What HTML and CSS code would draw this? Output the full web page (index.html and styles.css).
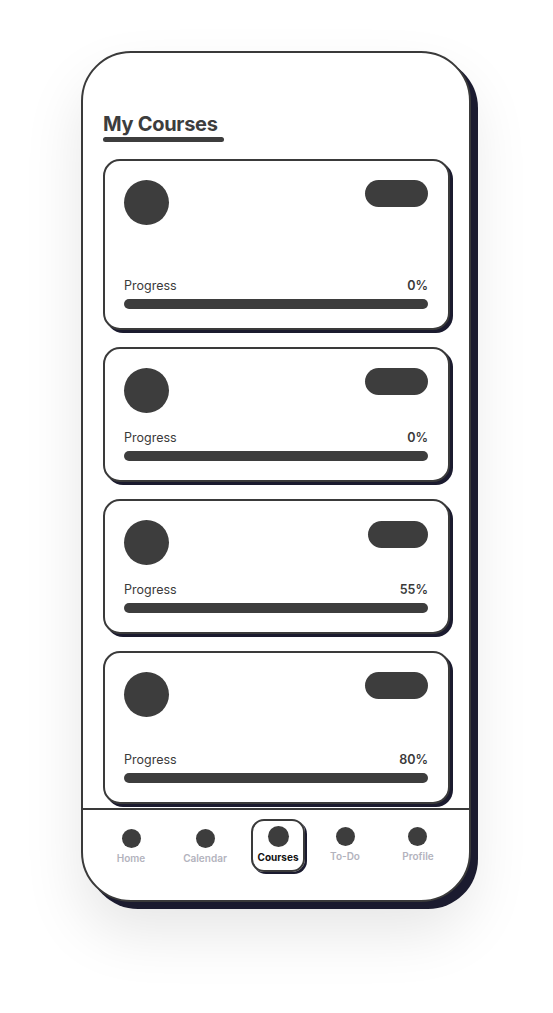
FILE: index.html
```html
<!DOCTYPE html>
<html lang="en">
<head>
<meta charset="utf-8">
<title>My Courses</title>
<link rel="stylesheet" href="styles.css">
</head>
<body>
<div class="stage">
  <div class="phone">
    <main class="content">
      <h1 class="title">My Courses</h1>
      <div class="title-bar"></div>
      <div class="cards">
        <section class="card">
          <div class="card-head"><span class="avatar"></span><span class="pill"></span></div>
          <div class="progress progress--lg">
            <div class="progress-row"><span class="label">Progress</span><span class="pct">0%</span></div>
            <div class="bar"></div>
          </div>
        </section>
        <section class="card">
          <div class="card-head"><span class="avatar"></span><span class="pill"></span></div>
          <div class="progress">
            <div class="progress-row"><span class="label">Progress</span><span class="pct">0%</span></div>
            <div class="bar"></div>
          </div>
        </section>
        <section class="card">
          <div class="card-head"><span class="avatar"></span><span class="pill pill--sm"></span></div>
          <div class="progress">
            <div class="progress-row"><span class="label">Progress</span><span class="pct">55%</span></div>
            <div class="bar"></div>
          </div>
        </section>
        <section class="card">
          <div class="card-head"><span class="avatar"></span><span class="pill"></span></div>
          <div class="progress progress--md">
            <div class="progress-row"><span class="label">Progress</span><span class="pct">80%</span></div>
            <div class="bar"></div>
          </div>
        </section>
      </div>
    </main>
    <nav class="nav">
      <div class="nav-item"><span class="dot"></span><span class="nav-label">Home</span></div>
      <div class="nav-item"><span class="dot"></span><span class="nav-label">Calendar</span></div>
      <div class="nav-item nav-item--active"><span class="dot"></span><span class="nav-label">Courses</span></div>
      <div class="nav-item nav-item--up"><span class="dot"></span><span class="nav-label">To-Do</span></div>
      <div class="nav-item nav-item--up"><span class="dot"></span><span class="nav-label">Profile</span></div>
    </nav>
  </div>
</div>
</body>
</html>
```

FILE: styles.css
```css
* { box-sizing: border-box; }
html, body { margin: 0; padding: 0; background: #ffffff; }
body { font-family: Inter, "Noto Sans", sans-serif; color: #3d3d3d; }

.stage {
  width: 553px;
  height: 1013px;
  padding: 51px 0 0 81px;
}

.phone {
  width: 390px;
  height: 851px;
  border: 2px solid #3a3a3a;
  border-radius: 50px;
  background: #ffffff;
  box-shadow: 7px 7px 0 #1b1b2f, 0 30px 60px rgba(0, 0, 0, 0.10);
  display: flex;
  flex-direction: column;
  overflow: hidden;
}

.content {
  flex: 1;
  padding: 58px 19px 0 20px;
  overflow: hidden;
}

.title {
  margin: 0;
  font-size: 20px;
  line-height: 26px;
  font-weight: 700;
  letter-spacing: -0.3px;
  color: #3d3d3d;
}

.title-bar {
  width: 121px;
  height: 5px;
  border-radius: 3px;
  background: #3d3d3d;
}

.cards {
  margin-top: 17px;
  display: flex;
  flex-direction: column;
  gap: 17px;
}

.card {
  border: 2px solid #3a3a3a;
  border-radius: 17px;
  background: #fff;
  box-shadow: 3px 3px 0 #1b1b2f;
  padding: 19px 20px 19px 19px;
}

.card-head {
  display: flex;
  justify-content: space-between;
  align-items: flex-start;
}

.avatar {
  width: 45px;
  height: 45px;
  border-radius: 50%;
  background: #3d3d3d;
}

.pill {
  width: 63px;
  height: 27px;
  border-radius: 14px;
  background: #3d3d3d;
}
.pill--sm { width: 60px; margin-top: 1px; }

.progress { margin-top: 16px; }
.progress--lg { margin-top: 52px; }
.progress--md { margin-top: 34px; }

.progress-row {
  display: flex;
  justify-content: space-between;
  align-items: center;
  height: 16px;
  font-size: 12.5px;
}
.label { font-weight: 400; color: #3a3a3a; }
.pct { font-weight: 600; color: #3a3a3a; }

.bar {
  margin-top: 6px;
  height: 10px;
  border-radius: 5px;
  background: #3d3d3d;
}

.nav {
  height: 92px;
  flex: none;
  border-top: 2px solid #3a3a3a;
  display: grid;
  grid-template-columns: 74px 74px 72px 62px 84px;
  padding-left: 11px;
  align-items: start;
  justify-items: center;
}

.nav-item {
  display: flex;
  flex-direction: column;
  align-items: center;
  padding-top: 19px;
}
.nav-item--up { padding-top: 17px; }

.dot {
  width: 19px;
  height: 19px;
  border-radius: 50%;
  background: #3d3d3d;
}

.nav-label {
  margin-top: 3px;
  height: 14px;
  line-height: 14px;
  font-size: 10px;
  font-weight: 600;
  color: #b3b3bd;
}

.nav-item--active {
  margin-top: 9px;
  padding: 5px 0 6px;
  width: 54px;
  height: 53px;
  border: 2px solid #3a3a3a;
  border-radius: 13px;
  box-shadow: 2px 2px 0 #1b1b2f;
}
.nav-item--active .dot { width: 21px; height: 21px; }
.nav-item--active .nav-label { color: #111; font-weight: 700; }
```
